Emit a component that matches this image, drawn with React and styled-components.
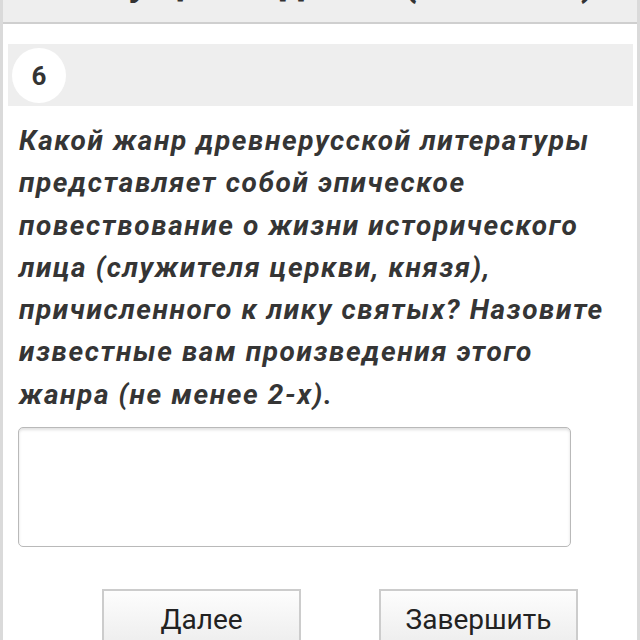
import React from 'react';
import styled, { createGlobalStyle } from 'styled-components';

const GlobalStyle = createGlobalStyle`
  html, body {
    margin: 0;
    padding: 0;
    background: #ffffff;
    overflow: hidden;
  }
  body {
    font-family: Roboto, "Liberation Sans", Arial, sans-serif;
    color: #333333;
  }
`

const Page = styled.div`
  width: 640px;
  height: 640px;
  box-sizing: border-box;
  border-left: 3px solid #dadada;
  border-right: 3px solid #dadada;
  background: #ffffff;
  overflow: hidden;
`

// the page is scrolled: only the bottom of the header bar shows
const Header = styled.div`
  height: 80px;
  margin-top: -56px;
  box-sizing: border-box;
  background: #eeeeee;
  border-bottom: 2px solid #cfcfcf;
  display: flex;
  align-items: flex-end;
  padding-left: 58px;
  overflow: hidden;
`

const HeaderTitle = styled.div`
  font-size: 40px;
  font-weight: 700;
  line-height: 1;
  margin-bottom: 20px;
  white-space: nowrap;
  color: #333;
`

const Content = styled.div`
  padding: 20px 4px 0 5px;
`

const NumberBar = styled.div`
  height: 62px;
  box-sizing: border-box;
  background: #eeeeee;
  padding: 4px;
  display: flex;
  align-items: flex-start;
`

const NumberCircle = styled.div`
  width: 54px;
  height: 55px;
  border-radius: 50%;
  background: #ffffff;
  display: flex;
  align-items: center;
  justify-content: center;
  font-size: 26px;
  font-weight: 700;
  color: #333;
`

const Question = styled.p`
  margin: 14px 0 0;
  padding: 0 4px 0 11px;
  font-size: 28px;
  line-height: 42.3px;
  letter-spacing: 1.6px;
  font-weight: 700;
  font-style: italic;
  white-space: nowrap;
  color: #353535;
`

const Answer = styled.textarea`
  display: block;
  margin: 11px 0 0 10px;
  width: 553px;
  height: 120px;
  box-sizing: border-box;
  border: 1px solid #b9b9b9;
  border-radius: 5px;
  box-shadow: inset 0 2px 3px rgba(0, 0, 0, 0.12);
  background: #ffffff;
  resize: none;
  outline: none;
  font: inherit;
`

const Buttons = styled.div`
  display: flex;
  gap: 78px;
  margin-top: 42px;
  padding-left: 94px;
`

const Button = styled.button`
  width: 199px;
  height: 62px;
  box-sizing: border-box;
  border: 2px solid #cccccc;
  border-radius: 0;
  background: linear-gradient(#fdfdfd, #ececec);
  font-family: Roboto, "Liberation Sans", Arial, sans-serif;
  font-size: 28px;
  color: #222;
  padding: 10px 0 0;
  display: flex;
  align-items: flex-start;
  justify-content: center;
  line-height: 38px;
`

const lines = [
  'Какой жанр древнерусской литературы',
  'представляет собой эпическое',
  'повествование о жизни исторического',
  'лица (служителя церкви, князя),',
  'причисленного к лику святых? Назовите',
  'известные вам произведения этого',
  'жанра (не менее 2-х).'
];

export default function App() {
  return <>
    <GlobalStyle />
    <Page>
      <Header>
        <HeaderTitle>Текущее задание (11 класс)</HeaderTitle>
      </Header>

      <Content>
        <NumberBar>
          <NumberCircle>6</NumberCircle>
        </NumberBar>

        <Question>
          {lines.map((l, i) => <React.Fragment key={i}>{l}{i < lines.length - 1 && <br />}</React.Fragment>)}
        </Question>

        <Answer />

        <Buttons>
          <Button>Далее</Button>
          <Button>Завершить</Button>
        </Buttons>
      </Content>
    </Page>
  </>;
}
